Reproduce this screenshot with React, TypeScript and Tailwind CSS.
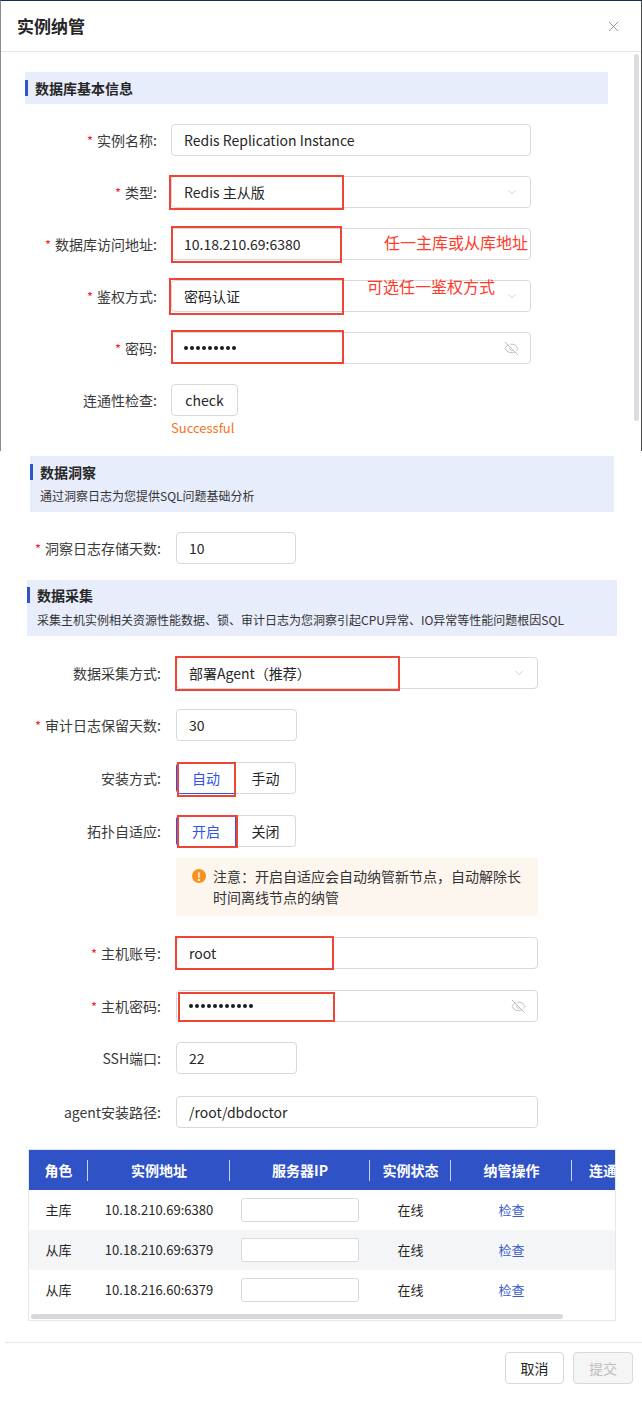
import React from "react";
import { ChevronDown, EyeOff, X } from "lucide-react";

const Req = () => <span className="text-[#f5222d] mr-[4px] text-[13px]">*</span>;

function Input({
  value,
  className,
  children,
}: {
  value?: string;
  className: string;
  children?: React.ReactNode;
}) {
  return (
    <div
      className={
        "relative h-[32px] border border-[#d9d9d9] rounded-[4px] bg-white flex items-center pl-[12px] pr-[11px] text-[14px] text-[#262626] " +
        className
      }
    >
      <span className="flex-1 whitespace-nowrap">{value}</span>
      {children}
    </div>
  );
}

function RedBox({ className }: { className: string }) {
  return <div className={"absolute border-2 border-[#ee4536] pointer-events-none " + className} />;
}

function Dots({ n }: { n: number }) {
  return (
    <span className="flex items-center gap-[2.5px]">
      {Array.from({ length: n }).map((_, i) => (
        <span key={i} className="w-[3.5px] h-[3.5px] rounded-full bg-[#1a1a1a]" />
      ))}
    </span>
  );
}

function Chevron() {
  return <ChevronDown size={14} strokeWidth={1.2} className="text-[#bfbfbf]" />;
}

function Eye() {
  return <EyeOff size={15} strokeWidth={1.4} className="text-[#b5b5b5]" />;
}

function Seg({ a, b }: { a: string; b: string }) {
  return (
    <div className="flex h-[32px] text-[14px]">
      <div className="w-[60px] flex items-center justify-center border border-[#2f54eb] text-[#2f54eb] rounded-l-[4px]">
        {a}
      </div>
      <div className="w-[60px] flex items-center justify-center border border-l-0 border-[#d9d9d9] text-[#262626] rounded-r-[4px]">
        {b}
      </div>
    </div>
  );
}

function TopLabel({ req, text }: { req?: boolean; text: string }) {
  return (
    <div className="w-[157px] text-right text-[14px] text-[#3a3a3a] whitespace-nowrap pr-[1px]">
      {req && <Req />}
      {text}:
    </div>
  );
}

function LowLabel({ req, text }: { req?: boolean; text: string }) {
  return (
    <div className="w-[161px] text-right text-[14px] text-[#3a3a3a] whitespace-nowrap">
      {req && <Req />}
      {text}:
    </div>
  );
}

const rows = [
  { role: "主库", addr: "10.18.210.69:6380", bg: "bg-white" },
  { role: "从库", addr: "10.18.210.69:6379", bg: "bg-[#f4f5f7]" },
  { role: "从库", addr: "10.18.216.60:6379", bg: "bg-white" },
];

export default function App() {
  return (
    <div className="w-[642px] h-[1404px] bg-white relative overflow-hidden font-['Noto_Sans_CJK_SC',sans-serif] text-[#333]">
      {/* Top dialog frame */}
      <div className="relative h-[451px] border-t border-t-[#1c2b5e] border-l border-l-[#8c8c8c] border-r border-r-[#4d4d4d]">
        <div className="h-[51px] border-b border-[#e6e6e6] flex items-center justify-between pl-[16px] pr-[19px]">
          <span className="text-[17px] font-bold text-[#262626]">实例纳管</span>
          <X size={17} strokeWidth={1.3} className="text-[#8c8c8c]" />
        </div>
        {/* scrollbar */}
        <div className="absolute right-[2px] top-[53px] w-[5px] h-[367px] rounded-full bg-[#dcdde1]" />

        <div className="mt-[20px] ml-[24px] w-[583px] h-[32px] bg-[#e8edfc] flex items-center">
          <div className="w-[3px] h-[16px] bg-[#2f54c8]" />
          <span className="ml-[7px] text-[14px] font-bold text-[#262626]">数据库基本信息</span>
        </div>

        <div className="mt-[20px] flex flex-col gap-[20px]">
          <div className="flex items-center">
            <TopLabel req text="实例名称" />
            <Input className="ml-[13px] w-[360px]" value="Redis Replication Instance" />
          </div>
          <div className="flex items-center">
            <TopLabel req text="类型" />
            <Input className="ml-[13px] w-[360px]" value="Redis 主从版">
              <Chevron />
              <RedBox className="left-[-3px] top-[-2px] w-[175px] h-[35px]" />
            </Input>
          </div>
          <div className="flex items-center">
            <TopLabel req text="数据库访问地址" />
            <Input className="ml-[13px] w-[360px]" value="10.18.210.69:6380">
              <RedBox className="left-[-1px] top-[-3px] w-[171px] h-[37px]" />
              <span className="absolute left-[212px] top-[1px] text-[16px] text-[#ff3b2b] whitespace-nowrap">
                任一主库或从库地址
              </span>
            </Input>
          </div>
          <div className="flex items-center">
            <TopLabel req text="鉴权方式" />
            <Input className="ml-[13px] w-[360px]" value="密码认证">
              <Chevron />
              <RedBox className="left-[-3px] top-[-3px] w-[175px] h-[37px]" />
              <span className="absolute left-[195px] top-[-7px] text-[16px] text-[#ff3b2b] whitespace-nowrap">
                可选任一鉴权方式
              </span>
            </Input>
          </div>
          <div className="flex items-center">
            <TopLabel req text="密码" />
            <Input className="ml-[13px] w-[360px]">
              <span className="absolute left-[12px] top-[13px]">
                <Dots n={9} />
              </span>
              <Eye />
              <RedBox className="left-[-1px] top-[-3px] w-[173px] h-[34px]" />
            </Input>
          </div>
          <div className="flex items-start">
            <div className="h-[32px] flex items-center">
              <TopLabel text="连通性检查" />
            </div>
            <div className="ml-[13px] flex flex-col">
              <div className="w-[67px] h-[32px] border border-[#d9d9d9] rounded-[4px] flex items-center justify-center text-[14px] text-[#262626]">
                check
              </div>
              <span className="mt-[3px] text-[13px] leading-[18px] text-[#f5731c]">Successful</span>
            </div>
          </div>
        </div>
      </div>

      {/* 数据洞察 */}
      <div className="mt-[5px] ml-[30px] w-[584px] h-[56px] bg-[#e8edfc] pt-[7px]">
        <div className="flex items-center h-[18px]">
          <div className="w-[3px] h-[16px] bg-[#2f54c8]" />
          <span className="ml-[7px] text-[14px] font-bold text-[#262626] leading-[18px]">数据洞察</span>
        </div>
        <div className="mt-[6px] ml-[10px] text-[12px] leading-[18px] text-[#333]">
          通过洞察日志为您提供SQL问题基础分析
        </div>
      </div>

      <div className="mt-[20px] flex items-center">
        <LowLabel req text="洞察日志存储天数" />
        <Input className="ml-[15px] w-[120px]" value="10" />
      </div>

      {/* 数据采集 */}
      <div className="mt-[16px] ml-[27px] w-[590px] h-[56px] bg-[#e8edfc] pt-[6px]">
        <div className="flex items-center h-[18px]">
          <div className="w-[3px] h-[16px] bg-[#2f54c8]" />
          <span className="ml-[7px] text-[14px] font-bold text-[#262626] leading-[18px]">数据采集</span>
        </div>
        <div className="mt-[7px] ml-[10px] text-[12px] leading-[18px] text-[#333] whitespace-nowrap">
          采集主机实例相关资源性能数据、锁、审计日志为您洞察引起CPU异常、IO异常等性能问题根因SQL
        </div>
      </div>

      <div className="mt-[21px] flex items-center">
        <LowLabel text="数据采集方式" />
        <Input className="ml-[15px] w-[362px]" value="部署Agent（推荐）">
          <Chevron />
          <RedBox className="left-[-2px] top-[-2px] w-[225px] h-[35px]" />
        </Input>
      </div>

      <div className="mt-[20px] flex items-center">
        <LowLabel req text="审计日志保留天数" />
        <Input className="ml-[15px] w-[121px]" value="30" />
      </div>

      <div className="mt-[21px] flex items-center">
        <LowLabel text="安装方式" />
        <div className="relative ml-[15px]">
          <Seg a="自动" b="手动" />
          <RedBox className="left-[1px] top-[0px] w-[59px] h-[35px]" />
        </div>
      </div>

      <div className="mt-[21px] flex items-center">
        <LowLabel text="拓扑自适应" />
        <div className="relative ml-[15px]">
          <Seg a="开启" b="关闭" />
          <RedBox className="left-[1px] top-[0px] w-[61px] h-[33px]" />
        </div>
      </div>

      <div className="mt-[11px] ml-[176px] w-[362px] bg-[#fdf6ef] py-[8px] pl-[16px] pr-[12px] flex items-start">
        <div className="mt-[3px] w-[14px] h-[14px] rounded-full bg-[#f8921e] flex items-center justify-center text-white text-[11px] font-bold leading-none shrink-0">
          !
        </div>
        <div className="ml-[7px] text-[14px] leading-[21px] text-[#333]">
          注意：开启自适应会自动纳管新节点，自动解除长时间离线节点的纳管
        </div>
      </div>

      <div className="mt-[21px] flex items-center">
        <LowLabel req text="主机账号" />
        <Input className="ml-[15px] w-[362px]" value="root">
          <RedBox className="left-[-2px] top-[-2px] w-[159px] h-[34px]" />
        </Input>
      </div>

      <div className="mt-[21px] flex items-center">
        <LowLabel req text="主机密码" />
        <Input className="ml-[15px] w-[362px]">
          <span className="absolute left-[12px] top-[13px]">
            <Dots n={11} />
          </span>
          <span className="flex-1" />
          <Eye />
          <RedBox className="left-[1px] top-[1px] w-[157px] h-[30px]" />
        </Input>
      </div>

      <div className="mt-[20px] flex items-center">
        <LowLabel text="SSH端口" />
        <Input className="ml-[15px] w-[121px]" value="22" />
      </div>

      <div className="mt-[22px] flex items-center">
        <LowLabel text="agent安装路径" />
        <Input className="ml-[15px] w-[362px]" value="/root/dbdoctor" />
      </div>

      {/* table */}
      <div className="mt-[21px] ml-[28px] w-[588px] border border-[#e6e8eb] overflow-hidden">
        <div className="grid grid-cols-[59px_142px_140px_81px_121px_200px] h-[40px] bg-[#2f52c6] text-white text-[14px] font-bold">
          {["角色", "实例地址", "服务器IP", "实例状态", "纳管操作"].map((h) => (
            <div
              key={h}
              className="relative flex items-center justify-center after:absolute after:right-0 after:top-[10px] after:h-[21px] after:w-px after:bg-[#c9d3f3]"
            >
              {h}
            </div>
          ))}
          <div className="flex items-center pl-[17px] whitespace-nowrap">连通性检查</div>
        </div>
        {rows.map((r, i) => (
          <div
            key={i}
            className={"grid grid-cols-[59px_142px_140px_81px_121px_200px] h-[40px] text-[13px] text-[#262626] " + r.bg}
          >
            <div className="flex items-center justify-center">{r.role}</div>
            <div className="flex items-center justify-center">{r.addr}</div>
            <div className="flex items-center justify-center">
              <div className="w-[118px] h-[24px] border border-[#d9d9d9] rounded-[3px] bg-white" />
            </div>
            <div className="flex items-center justify-center">在线</div>
            <div className="flex items-center justify-center text-[#3a5bd0]">检查</div>
            <div />
          </div>
        ))}
        <div className="mt-[4px] mb-[1px] ml-[2px] w-[532px] h-[5px] rounded-full bg-[#d6d8dc]" />
      </div>

      {/* footer */}
      <div className="mt-[21px] ml-[5px] border-t border-[#e6e6e6]" />
      <div className="mt-[9px] flex justify-end gap-[9px] pr-[9px]">
        <div className="w-[59px] h-[32px] border border-[#d9d9d9] rounded-[4px] flex items-center justify-center text-[14px] text-[#262626] bg-white">
          取消
        </div>
        <div className="w-[60px] h-[32px] border border-[#d9d9d9] rounded-[4px] flex items-center justify-center text-[14px] text-[#bfbfbf] bg-[#f5f5f5]">
          提交
        </div>
      </div>
    </div>
  );
}
